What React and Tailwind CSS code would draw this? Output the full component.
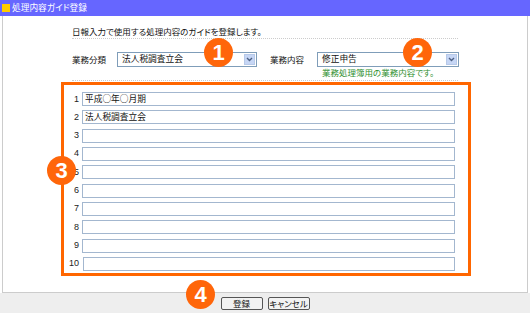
const font = "font-['Noto_Sans_CJK_JP','Noto_Sans',sans-serif] [font-feature-settings:'palt']";

const lines = ["平成○年○月期", "法人税調査立会", "", "", "", "", "", "", "", ""];

function Badge({ n, className }) {
  return (
    <div
      className={`absolute flex h-[29px] w-[29px] items-center justify-center rounded-full bg-[#ff660a] font-['Liberation_Sans',Arial,sans-serif] text-[22px] font-bold leading-none text-white ${className}`}
    >
      {n}
    </div>
  );
}

function Select({ value, width }) {
  return (
    <div
      className={`flex h-[15px] items-center border border-[#7f9db9] bg-white pl-[4px] pr-[1px] ${width}`}
    >
      <span className="flex-1 text-[8.7px] leading-none text-[#111]">{value}</span>
      <span className="flex h-[11px] w-[11px] items-center justify-center border border-[#b7c9e8] bg-[#c6d6f5]">
        <svg width="7" height="5" viewBox="0 0 7 5">
          <polyline points="1,1 3.5,3.5 6,1" fill="none" stroke="#4d6185" strokeWidth="1.4" />
        </svg>
      </span>
    </div>
  );
}

export default function App() {
  return (
    <div className={`relative h-[315px] w-[530px] overflow-hidden bg-white ${font}`}>
      <div className="flex h-[16px] items-center bg-[#6666ff] pl-[2px]">
        <span className="mr-[2px] h-[8px] w-[8px] bg-[#ffcc00]" />
        <span className="text-[8.7px] leading-none text-white">処理内容ガイド登録</span>
      </div>

      <div className="mx-[2px] h-[277px] border-x border-b border-[#cccccc]">
        <div className="pl-[69px]">
          <div className="w-[386px] border-b border-dotted border-[#cccccc] pb-[1px] pt-[9px] text-[8.5px] leading-[12px] text-[#111]">
            日報入力で使用する処理内容のガイドを登録します。
          </div>
          <div className="mt-[13px] flex items-center text-[8.5px] text-[#111]">
            <span className="w-[45px]">業務分類</span>
            <Select value="法人税調査立会" width="w-[140px]" />
            <span className="ml-[13px] w-[47px]">業務内容</span>
            <Select value="修正申告" width="w-[142px]" />
          </div>
          <div className="ml-[250px] text-[8.5px] leading-[11px] text-[#2f8f2f]">
            業務処理簿用の業務内容です。
          </div>
          <div className="mt-[2px] w-[386px] border-b border-dotted border-[#cccccc]" />
        </div>

        <div className="ml-[58px] mt-[1px] h-[194px] w-[410px] border-[3px] border-[#ff6600] pt-[7px]">
          <div className="flex flex-col gap-[4.33px]">
            {lines.map((v, i) => (
              <div key={i} className="flex items-center">
                <span className="w-[15px] text-right font-['Liberation_Sans',Arial,sans-serif] text-[9px] leading-none text-[#222]">
                  {i + 1}
                </span>
                <div
                  className={`ml-[3px] flex h-[14px] items-center border border-[#a3b7cf] bg-white pl-[2px] text-[8.7px] leading-none text-[#111] ${
                    i === 9 ? "ml-[4px] w-[372px]" : "w-[373px]"
                  }`}
                >
                  {v}
                </div>
              </div>
            ))}
          </div>
        </div>
      </div>

      <div className="flex h-[20px] items-center justify-center gap-[5px] bg-[#eeeeee]">
        <button className="flex h-[13px] w-[42px] items-center justify-center rounded-[2px] border border-[#555] bg-[#f2f2f2] text-[8.5px] leading-none text-[#111]">
          登録
        </button>
        <button className="flex h-[13px] w-[42px] items-center justify-center rounded-[2px] border border-[#555] bg-[#f2f2f2] text-[8.5px] leading-none text-[#111]">
          キャンセル
        </button>
      </div>

      <Badge n="1" className="left-[204px] top-[38px]" />
      <Badge n="2" className="left-[403px] top-[38px]" />
      <Badge n="3" className="left-[47px] top-[156px]" />
      <Badge n="4" className="left-[186px] top-[280px]" />
    </div>
  );
}
